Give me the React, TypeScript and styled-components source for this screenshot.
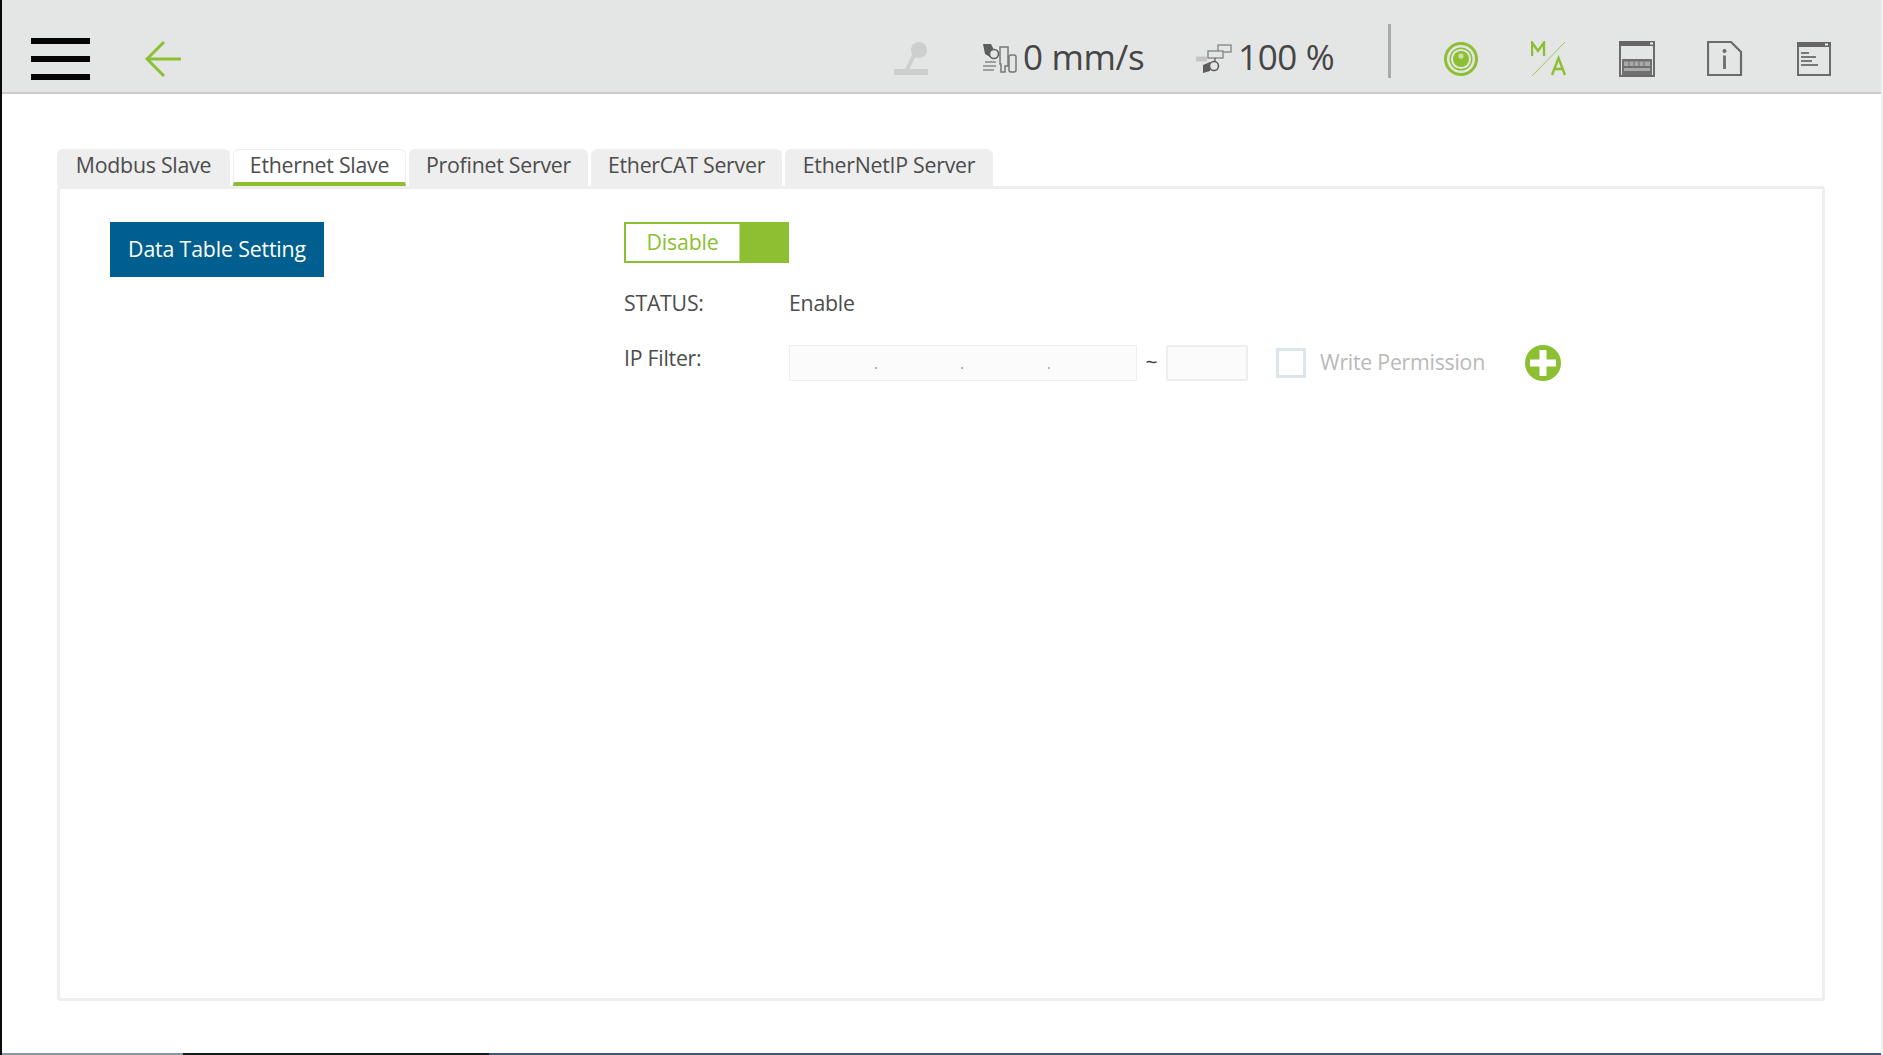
import React from 'react';
import styled, { createGlobalStyle } from 'styled-components';

const GREEN = '#8cbf31';
const TEXT = '#4c4c4c';

const Global = createGlobalStyle`
  html, body { margin: 0; padding: 0; background: #fff; }
  body { font-family: "Open Sans", "Noto Sans", sans-serif; color: ${TEXT}; }
`;

const Screen = styled.div`
  box-sizing: border-box;
  width: 1883px;
  height: 1055px;
  overflow: hidden;
  display: flex;
  flex-direction: column;
  background: #fff;
  border-left: 2px solid #0a0a0a;
  border-right: 2px solid #f0f0f0;
`;

const Header = styled.header`
  box-sizing: border-box;
  height: 94px;
  flex: none;
  display: flex;
  align-items: center;
  padding-top: 20px;
  background: #e4e6e5;
  border-bottom: 2px solid #cbcbcb;
`;

const Hamburger = styled.button`
  width: 59px;
  height: 42px;
  margin: 5px 0 0 29px;
  padding: 0;
  border: 0;
  background: transparent;
  display: flex;
  flex-direction: column;
  justify-content: space-between;
`;

const Bar = styled.span`
  display: block;
  height: 6px;
  background: #050505;
`;

const IconSlot = styled.div<{ $w: number; $ml: number }>`
  flex: none;
  width: ${(p) => p.$w}px;
  margin-left: ${(p) => p.$ml}px;
  display: flex;
  margin-top: 6px;
  svg { display: block; }
`;

const Readout = styled.span<{ $w: number; $ml: number }>`
  flex: none;
  width: ${(p) => p.$w}px;
  margin-left: ${(p) => p.$ml}px;
  font-size: 35px;
  line-height: 40px;
  letter-spacing: -0.35px;
  color: #454545;
  white-space: nowrap;
  margin-top: 2px;
`;

const Divider = styled.div`
  flex: none;
  width: 3px;
  height: 54px;
  margin: -11px 0 0 53px;
  background: #a9abaa;
`;

const Body = styled.main`
  flex: 1;
  display: flex;
  flex-direction: column;
  padding: 55px 0 52px 55px;
  min-height: 0;
`;

const TabStrip = styled.div`
  display: flex;
  gap: 3px;
  height: 37px;
  flex: none;
`;

const Tab = styled.div<{ $active?: boolean; $w: number }>`
  box-sizing: border-box;
  width: ${(p) => p.$w}px;
  height: 37px;
  display: flex;
  align-items: flex-start;
  justify-content: center;
  padding-top: ${(p) => (p.$active ? 1 : 2)}px;
  border-radius: 6px 6px 0 0;
  font-size: 21.3px;
  line-height: 28px;
  letter-spacing: -0.25px;
  color: ${TEXT};
  white-space: nowrap;
  background: ${(p) => (p.$active ? '#fff' : '#eeeeee')};
  border: ${(p) => (p.$active ? '1px solid #eeeeee' : '0')};
  border-bottom: ${(p) => (p.$active ? `4px solid ${GREEN}` : '0')};
`;

const Panel = styled.section`
  box-sizing: border-box;
  width: 1768px;
  flex: 1;
  border: 3px solid #eeeeee;
  border-radius: 3px;
  padding: 33px 0 0 50px;
  display: flex;
  align-items: flex-start;
`;

const PrimaryButton = styled.button`
  flex: none;
  width: 214px;
  height: 55px;
  padding: 0 0 3px;
  border: 0;
  background: #005f8e;
  color: #fff;
  font-family: inherit;
  font-size: 21.3px;
  letter-spacing: -0.15px;
`;

const Form = styled.div`
  margin-left: 300px;
  display: flex;
  flex-direction: column;
`;

const Toggle = styled.div`
  box-sizing: border-box;
  width: 165px;
  height: 41px;
  display: flex;
  border: 2px solid ${GREEN};
`;

const ToggleLabel = styled.div`
  box-sizing: border-box;
  width: 114px;
  display: flex;
  justify-content: center;
  align-items: center;
  padding-bottom: 3px;
  color: ${GREEN};
  font-size: 21.3px;
  letter-spacing: -0.15px;
  border-right: 1px solid #c5dd9a;
`;

const ToggleKnob = styled.div`
  flex: 1;
  background: ${GREEN};
`;

const StatusRow = styled.div`
  display: flex;
  margin-top: 25px;
  height: 29px;
  align-items: center;
  font-size: 21.3px;
  letter-spacing: -0.25px;
`;

const Label = styled.div`
  width: 165px;
  flex: none;
`;

const FilterRow = styled.div`
  display: flex;
  align-items: center;
  margin-top: 28px;
  height: 36px;
  font-size: 21.3px;
  letter-spacing: -0.25px;
`;

const FilterLabel = styled(Label)`
  margin-top: -12px;
`;

const IpField = styled.div`
  box-sizing: border-box;
  width: 348px;
  height: 36px;
  display: grid;
  grid-template-columns: repeat(4, 1fr);
  background: #fbfbfb;
  border: 1px solid #eeeeee;
`;

const IpOctet = styled.div`
  position: relative;
  &:not(:last-child)::after {
    content: '';
    position: absolute;
    right: 0;
    bottom: 11px;
    width: 2px;
    height: 2px;
    background: #b5b5b5;
  }
`;

const Tilde = styled.span`
  flex: none;
  width: 29px;
  text-align: center;
  font-size: 21px;
  margin-top: -2px;
  color: #444;
`;

const PortField = styled.div`
  box-sizing: border-box;
  width: 82px;
  height: 36px;
  background: #fbfbfb;
  border: 2px solid #eeeeee;
  border-radius: 2px;
`;

const Checkbox = styled.div`
  box-sizing: border-box;
  flex: none;
  width: 30px;
  height: 30px;
  margin-left: 28px;
  border: 3px solid #dbe5ea;
`;

const CheckLabel = styled.span`
  margin-left: 14px;
  width: 205px;
  flex: none;
  margin-top: -3px;
  color: #b9b9b9;
  white-space: nowrap;
`;

const AddButton = styled.div`
  flex: none;
  display: flex;
  svg { display: block; }
`;

const TaskStrip = styled.div`
  flex: none;
  height: 2px;
  display: flex;
  background: #3f5a75;
`;

const TaskSegment = styled.span<{ $w: number; $dark?: boolean }>`
  flex: none;
  width: ${(p) => p.$w}px;
  background: ${(p) => (p.$dark ? '#16191d' : '#8a97a3')};
`;

const JoystickIcon = () => (
  <svg width="34" height="34" viewBox="0 0 34 34">
    <rect x="0" y="27" width="34" height="6" fill="#cdcfce" />
    <path d="M20 13 L13 28" stroke="#cdcfce" strokeWidth="4" />
    <circle cx="25" cy="8" r="8" fill="#cdcfce" />
  </svg>
);

const SpeedIcon = () => (
  <svg width="36" height="30" viewBox="0 0 36 30" fill="none">
    <path d="M1 0 H9 L13 8 L8 13 L3 10 Z" fill="#5d5d5d" />
    <circle cx="12" cy="10" r="4.5" fill="#e4e6e5" stroke="#5d5d5d" strokeWidth="1.6" />
    <path d="M18 3 h8 v19 h-3 v6 h-4 v-8 h-1 z" fill="#e4e6e5" stroke="#777" strokeWidth="1.5" />
    <rect x="27" y="11" width="7" height="17" rx="2" fill="#e4e6e5" stroke="#777" strokeWidth="1.5" />
    <path d="M3 18 h11 M1 22 h13 M1 26 h11" stroke="#888" strokeWidth="1.4" />
  </svg>
);

const RatioIcon = () => (
  <svg width="36" height="30" viewBox="0 0 36 30" fill="none">
    <path d="M0 15 h11" stroke="#c4c4c4" strokeWidth="5" />
    <rect x="22" y="1" width="13" height="7" fill="#e4e6e5" stroke="#888" strokeWidth="1.4" />
    <rect x="12" y="7" width="15" height="7" fill="#e4e6e5" stroke="#888" strokeWidth="1.4" />
    <path d="M19 14 v5" stroke="#666" strokeWidth="1.4" />
    <path d="M7 21 L14 18 L14 27 L7 29 Z" fill="#5d5d5d" />
    <circle cx="18" cy="22" r="4.5" fill="#e4e6e5" stroke="#5d5d5d" strokeWidth="1.6" />
  </svg>
);

const TargetIcon = () => (
  <svg width="34" height="34" viewBox="0 0 34 34" fill="none">
    <circle cx="17" cy="17" r="15.5" stroke={GREEN} strokeWidth="3" />
    <circle cx="17" cy="17" r="10.8" stroke={GREEN} strokeWidth="1.4" />
    <circle cx="17" cy="17" r="8" fill={GREEN} />
    <circle cx="17" cy="14" r="2.6" fill="#cfe0ad" />
  </svg>
);

const ModeIcon = () => (
  <svg width="36" height="36" viewBox="0 0 36 36" fill="none">
    <path d="M1 15 V1.5 L7 10 L13 1.5 V15" stroke={GREEN} strokeWidth="2.4" />
    <path d="M34 1 L1 35" stroke={GREEN} strokeWidth="1" opacity="0.8" />
    <path d="M21 34 L27.5 17 L34 34 M23.5 28 H31.5" stroke={GREEN} strokeWidth="2.4" />
  </svg>
);

const KeyboardIcon = () => (
  <svg width="36" height="36" viewBox="0 0 36 36" fill="none">
    <rect x="1" y="1" width="34" height="34" fill="#e4e6e5" stroke="#6b6b6b" strokeWidth="2" />
    <rect x="0" y="0" width="36" height="5" fill="#666" />
    <rect x="31" y="1.5" width="3" height="2" fill="#eee" />
    <rect x="3" y="18" width="30" height="16" fill="#6f6f6f" />
    <path d="M5 20.5 H31 V25 H5 Z M5 27 H31 V30 H5 Z" fill="#a9a9a9" />
    <path d="M10 20.5 v5 M15 20.5 v5 M20 20.5 v5 M25 20.5 v5" stroke="#6f6f6f" strokeWidth="1" />
  </svg>
);

const InfoIcon = () => (
  <svg width="36" height="36" viewBox="0 0 36 36" fill="none">
    <path d="M1 1 H24 L34 11 V34 H1 Z" fill="#e4e6e5" stroke="#6b6b6b" strokeWidth="2.2" />
    <circle cx="17.5" cy="10" r="2" fill="#6b6b6b" />
    <path d="M17.5 14.5 V28" stroke="#6b6b6b" strokeWidth="2.8" />
  </svg>
);

const LogIcon = () => (
  <svg width="34" height="34" viewBox="0 0 34 34" fill="none">
    <rect x="1" y="1" width="32" height="32" fill="#e4e6e5" stroke="#6b6b6b" strokeWidth="2" />
    <rect x="0" y="0" width="34" height="5" fill="#666" />
    <rect x="28" y="1.5" width="3" height="2" fill="#eee" />
    <path d="M4 11 H12 M4 15 H19 M4 19 H15 M4 23 H21" stroke="#777" strokeWidth="2" />
  </svg>
);

const BackIcon = () => (
  <svg width="36" height="36" viewBox="0 0 36 36" fill="none">
    <path d="M19 1 L2 18 L19 35 M2 18 H36" stroke={GREEN} strokeWidth="3" />
  </svg>
);

const PlusIcon = () => (
  <svg width="36" height="36" viewBox="0 0 36 36">
    <circle cx="18" cy="18" r="18" fill={GREEN} />
    <path d="M14.5 5 h7 v9.5 H31 v7 h-9.5 V31 h-7 v-9.5 H5 v-7 h9.5 z" fill="#fff" />
  </svg>
);

const tabs = [
  { label: 'Modbus Slave', w: 173 },
  { label: 'Ethernet Slave', w: 173, active: true },
  { label: 'Profinet Server', w: 179 },
  { label: 'EtherCAT Server', w: 191 },
  { label: 'EtherNetIP Server', w: 208 },
];

export default function App() {
  return (
    <>
      <Global />
      <Screen>
        <Header>
          <Hamburger aria-label="menu">
            <Bar />
            <Bar />
            <Bar />
          </Hamburger>
          <IconSlot $w={36} $ml={55}>
            <BackIcon />
          </IconSlot>
          <IconSlot $w={34} $ml={713}>
            <JoystickIcon />
          </IconSlot>
          <IconSlot $w={36} $ml={54}>
            <SpeedIcon />
          </IconSlot>
          <Readout $w={173} $ml={5}>0 mm/s</Readout>
          <IconSlot $w={36} $ml={0}>
            <RatioIcon />
          </IconSlot>
          <Readout $w={97} $ml={6}>100 %</Readout>
          <Divider />
          <IconSlot $w={34} $ml={53}>
            <TargetIcon />
          </IconSlot>
          <IconSlot $w={36} $ml={53}>
            <ModeIcon />
          </IconSlot>
          <IconSlot $w={36} $ml={52}>
            <KeyboardIcon />
          </IconSlot>
          <IconSlot $w={36} $ml={52}>
            <InfoIcon />
          </IconSlot>
          <IconSlot $w={34} $ml={54}>
            <LogIcon />
          </IconSlot>
        </Header>
        <Body>
          <TabStrip>
            {tabs.map((t) => (
              <Tab key={t.label} $w={t.w} $active={t.active}>
                {t.label}
              </Tab>
            ))}
          </TabStrip>
          <Panel>
            <PrimaryButton>Data Table Setting</PrimaryButton>
            <Form>
              <Toggle>
                <ToggleLabel>Disable</ToggleLabel>
                <ToggleKnob />
              </Toggle>
              <StatusRow>
                <Label>STATUS:</Label>
                <span>Enable</span>
              </StatusRow>
              <FilterRow>
                <FilterLabel>IP Filter:</FilterLabel>
                <IpField>
                  <IpOctet />
                  <IpOctet />
                  <IpOctet />
                  <IpOctet />
                </IpField>
                <Tilde>~</Tilde>
                <PortField />
                <Checkbox />
                <CheckLabel>Write Permission</CheckLabel>
                <AddButton>
                  <PlusIcon />
                </AddButton>
              </FilterRow>
            </Form>
          </Panel>
        </Body>
        <TaskStrip>
          <TaskSegment $w={181} />
          <TaskSegment $w={306} $dark />
        </TaskStrip>
      </Screen>
    </>
  );
}
